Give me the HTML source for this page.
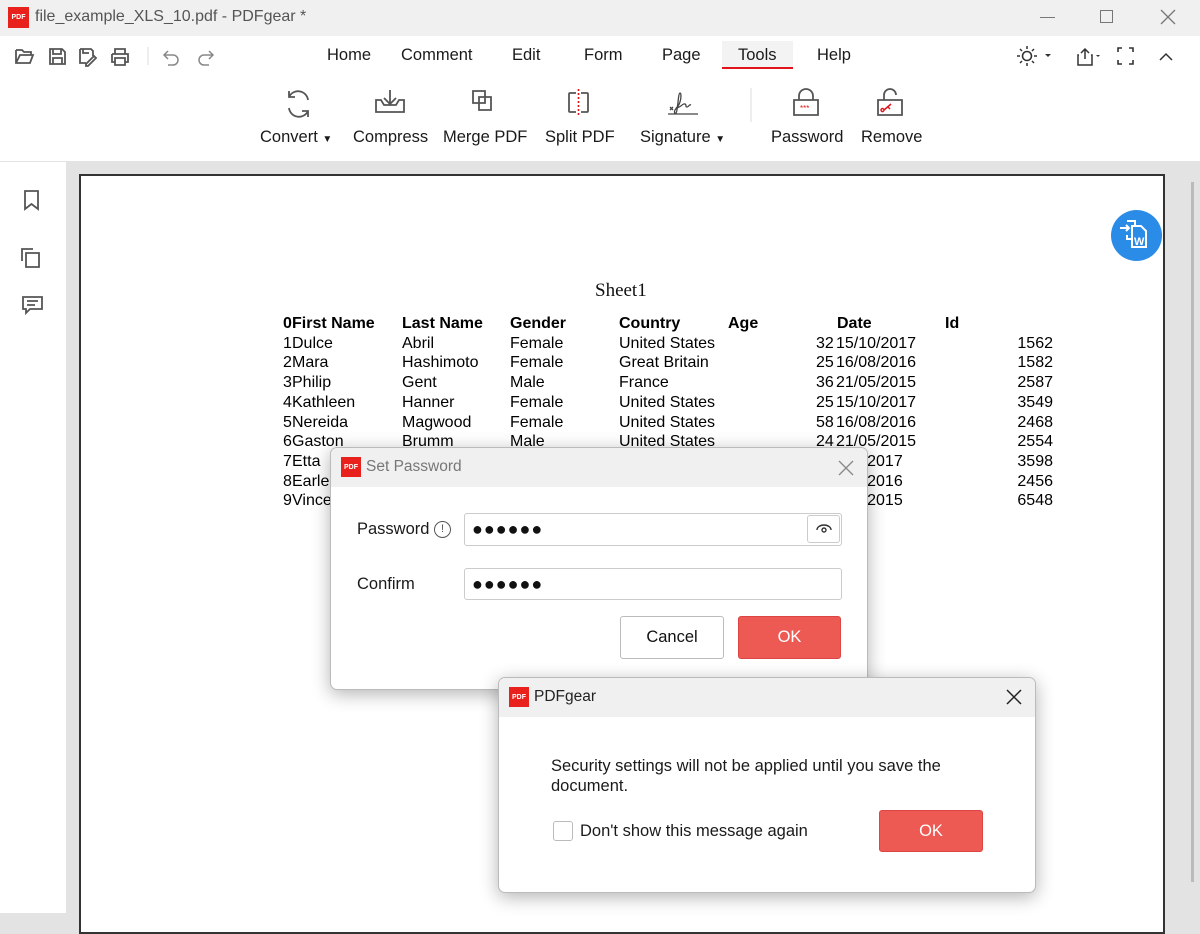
<!DOCTYPE html>
<html><head><meta charset="utf-8"><style>
*{margin:0;padding:0;box-sizing:border-box}
body{width:1200px;height:913px;overflow:hidden;position:relative;background:#e3e3e3;font-family:"Liberation Sans",sans-serif;color:#111}
.a{position:absolute}
.tb{font-size:16.5px;color:#1a1a1a}
.ic{stroke:#555;fill:none;stroke-width:1.8}
.tbl{font-family:"Liberation Sans",sans-serif;font-size:16px;color:#000}
.logo{background:#e8211d;color:#fff;font-size:7px;font-weight:bold;display:flex;align-items:center;justify-content:center}
</style></head><body>
<div class="a" style="left:0;top:0;width:1200px;height:36px;background:#f0f0f0"></div>
<div class="a logo" style="left:8px;top:7px;width:21px;height:21px">PDF</div>
<div class="a" style="left:35px;top:8px;font-size:16px;color:#555">file_example_XLS_10.pdf - PDFgear *</div>
<div class="a" style="left:1040px;top:17px;width:15px;height:1px;background:#777"></div>
<div class="a" style="left:1100px;top:10px;width:13px;height:13px;border:1.3px solid #777"></div>
<svg class="a" style="left:1160px;top:9px" width="16" height="16"><path d="M1 1L15 15M15 1L1 15" stroke="#777" stroke-width="1.3"/></svg>
<div class="a" style="left:0;top:36px;width:1200px;height:125px;background:#fff"></div>
<svg class="a" style="left:12px;top:44px" width="210" height="24">
<path class="ic" stroke-width="1.6" d="M4 6h6l2 2h7v3M4 6v13h14l3-8H8l-4 8"/>
<path class="ic" stroke-width="1.6" d="M38 5h12l3 3v12H38zM41 5v5h8V5M41 20v-6h9v6"/>
<path class="ic" stroke-width="1.6" d="M68 5h11l2 2v5M68 5v14h6M71 5v4h6M74 20l8-8 2 2-8 8h-2z"/>
<path class="ic" stroke-width="1.6" d="M100 10h16v8h-3M100 10v8h3M103 10V5h10v5M103 14h10v7h-10z"/>
<line x1="136" y1="3" x2="136" y2="21" stroke="#ddd"/>
<path d="M156 7l-4 4 4 4M152 11h9a5 5 0 010 10h-5" stroke="#888" fill="none" stroke-width="1.5"/>
<path d="M197 7l4 4-4 4M201 11h-9a5 5 0 000 10h5" stroke="#888" fill="none" stroke-width="1.5"/>
</svg>
<div class="a tb" style="left:327px;top:46px">Home</div>
<div class="a tb" style="left:401px;top:46px">Comment</div>
<div class="a tb" style="left:512px;top:46px">Edit</div>
<div class="a tb" style="left:584px;top:46px">Form</div>
<div class="a tb" style="left:662px;top:46px">Page</div>
<div class="a" style="left:722px;top:41px;width:71px;height:28px;background:#f3f3f3;border-bottom:2px solid #e0141a"></div>
<div class="a tb" style="left:738px;top:46px">Tools</div>
<div class="a tb" style="left:817px;top:46px">Help</div>
<svg class="a" style="left:1015px;top:44px" width="170" height="24">
<circle cx="12" cy="12" r="4.5" fill="none" stroke="#333" stroke-width="1.6"/>
<path d="M12 2v3M12 19v3M2 12h3M19 12h3M5 5l2 2M17 17l2 2M5 19l2-2M17 7l2-2" stroke="#333" stroke-width="1.5"/>
<path d="M30 10l3 3 3-3z" fill="#333"/>
<path d="M66 9l4-4 4 4M70 5v10M64 11h-1v10h14V11h-1" stroke="#333" fill="none" stroke-width="1.5"/>
<path d="M81 11l2 2 2-2z" fill="#333"/>
<path d="M103 8V4h4M114 4h4v4M118 16v4h-4M107 20h-4v-4" stroke="#333" fill="none" stroke-width="1.6"/>
<path d="M145 16l6-6 6 6" stroke="#333" fill="none" stroke-width="1.5"/>
</svg>
<svg class="a" style="left:270px;top:88px" width="660" height="34">
<path class="ic" d="M38 12A10 10 0 0019 9M19 3v6h6M19 20a10 10 0 0019 3M38 29v-6h-6"/>
<path class="ic" d="M120 2v14M114 10l6 6 6-6M106 12h5l3 5h12l3-5h5v12h-28z"/>
<path class="ic" d="M203 3h12v12h-12zM209 9h12v13h-12z"/>
<path class="ic" d="M306 5h-6a1 1 0 00-1 1v17a1 1 0 001 1h6M311 5h6a1 1 0 011 1v17a1 1 0 01-1 1h-6"/>
<path d="M308.5 1v28" stroke="#e0141a" stroke-dasharray="2 2" stroke-width="1.6"/>
<path d="M400 19l3 3M403 19l-3 3M406 20c5-3 6-15 4-15s-2 18-4 20 -3-4 3-6c3-1 4-4 6-3s0 3 2 3 2-3 4-2M398 26h30" stroke="#444" fill="none" stroke-width="1.3"/>
<line x1="481" y1="0" x2="481" y2="58" stroke="#ddd"/>
<path class="ic" d="M529 12V8a7 7 0 0114 0v4M524 12h24v15h-24z"/>
<text x="530" y="23" font-size="8" fill="#e0141a">***</text>
<path class="ic" d="M614 12V7a6 6 0 0112 0M608 12h24v15h-24z"/>
<path d="M614 22l7-6M618 19l2 2M614 22a1.5 1.5 0 100 .1" stroke="#e0141a" fill="none" stroke-width="1.5"/>
</svg>
<div class="a tb" style="left:260px;top:128px">Convert <span style="font-size:10px">▼</span></div>
<div class="a tb" style="left:353px;top:128px">Compress</div>
<div class="a tb" style="left:443px;top:128px">Merge PDF</div>
<div class="a tb" style="left:545px;top:128px">Split PDF</div>
<div class="a tb" style="left:640px;top:128px">Signature <span style="font-size:10px">▼</span></div>
<div class="a tb" style="left:771px;top:128px">Password</div>
<div class="a tb" style="left:861px;top:128px">Remove</div>
<div class="a" style="left:0;top:162px;width:66px;height:751px;background:#fff"></div>
<svg class="a" style="left:18px;top:188px" width="30" height="130">
<path d="M7 3h13v18l-6.5-5L7 21z" class="ic" stroke="#777" stroke-width="1.5"/>
<path d="M4 73V61h11M8 65h13v14H8z" class="ic" stroke="#777" stroke-width="1.5"/>
<path d="M5 109h19v12H12l-4 4v-4H5z M9 113h11M9 117h8" class="ic" stroke="#777" stroke-width="1.5"/>
</svg>
<div class="a" style="left:79px;top:174px;width:1086px;height:760px;background:#fff;border:2px solid #333"></div>
<div class="a" style="left:1191px;top:182px;width:3px;height:700px;background:#bbb"></div>
<div class="a" style="left:1111px;top:210px;width:51px;height:51px;border-radius:50%;background:#2b8ce8"></div>
<svg class="a" style="left:1118px;top:218px" width="40" height="36"><path d="M2 10h9M8 7l3 3-3 3M9 3h8v4M9 17v4h4M14 8h9l5 5v16H14z" stroke="#fff" fill="none" stroke-width="2"/><text x="16" y="27" font-size="11" font-weight="bold" fill="#fff">W</text></svg>
<div class="a" style="left:595px;top:280px;font-family:'Liberation Serif',serif;font-size:19px">Sheet1</div>
<div class="a tbl" style="left:0;top:314px;width:1200px;height:200px;line-height:19.7px">
<div class="a" style="left:283px;top:0;font-weight:bold">0<br></div>
<div class="a" style="left:283px;top:19.7px;line-height:19.7px">1<br>2<br>3<br>4<br>5<br>6<br>7<br>8<br>9</div>
<div class="a" style="left:292px;top:0"><b>First Name</b><br>Dulce<br>Mara<br>Philip<br>Kathleen<br>Nereida<br>Gaston<br>Etta<br>Earle<br>Vince</div>
<div class="a" style="left:402px;top:0"><b>Last Name</b><br>Abril<br>Hashimoto<br>Gent<br>Hanner<br>Magwood<br>Brumm</div>
<div class="a" style="left:510px;top:0"><b>Gender</b><br>Female<br>Female<br>Male<br>Female<br>Female<br>Male</div>
<div class="a" style="left:619px;top:0"><b>Country</b><br>United States<br>Great Britain<br>France<br>United States<br>United States<br>United States</div>
<div class="a" style="left:728px;top:0"><b>Age</b></div>
<div class="a" style="left:837px;top:0"><b>Date</b></div>
<div class="a" style="left:816px;top:19.7px">32<br>25<br>36<br>25<br>58<br>24</div>
<div class="a" style="left:836px;top:19.7px">15/10/2017<br>16/08/2016<br>21/05/2015<br>15/10/2017<br>16/08/2016<br>21/05/2015<br>&nbsp;&nbsp;&nbsp;&nbsp;0/2017<br>&nbsp;&nbsp;&nbsp;&nbsp;8/2016<br>&nbsp;&nbsp;&nbsp;&nbsp;5/2015</div>
<div class="a" style="left:945px;top:0"><b>Id</b></div>
<div class="a" style="left:1000px;top:19.7px;width:53px;text-align:right">1562<br>1582<br>2587<br>3549<br>2468<br>2554<br>3598<br>2456<br>6548</div>
</div>
<div class="a" style="left:330px;top:447px;width:538px;height:243px;background:#fff;border:1px solid #bbb;border-radius:7px;box-shadow:0 4px 18px rgba(0,0,0,.3);overflow:hidden">
<div style="height:39px;background:#f0f0f0;position:relative">
<div class="a logo" style="left:10px;top:9px;width:20px;height:20px">PDF</div>
<div class="a" style="left:35px;top:10px;font-size:15.5px;color:#777">Set Password</div>
<svg class="a" style="left:507px;top:12px" width="16" height="16"><path d="M1 1L15 15M15 1L1 15" stroke="#888" stroke-width="1.3"/></svg>
</div>
<div class="a tb" style="left:26px;top:72px">Password</div>
<div class="a" style="left:103px;top:73px;width:17px;height:17px;border:1.3px solid #555;border-radius:50%;font-size:11px;text-align:center;line-height:15px;color:#555">!</div>
<div class="a" style="left:133px;top:65px;width:378px;height:33px;border:1px solid #ccc;border-radius:3px;font-size:18px;line-height:31px;padding-left:7px;letter-spacing:1px">●●●●●●</div>
<div class="a" style="left:476px;top:67px;width:33px;height:28px;border:1px solid #ccc;border-radius:3px"></div>
<svg class="a" style="left:484px;top:74px" width="18" height="14"><path d="M2 8a7 5 0 0114 0" stroke="#333" fill="none" stroke-width="1.4"/><circle cx="9" cy="8" r="2" stroke="#333" fill="none" stroke-width="1.4"/></svg>
<div class="a tb" style="left:26px;top:127px">Confirm</div>
<div class="a" style="left:133px;top:120px;width:378px;height:32px;border:1px solid #ccc;border-radius:3px;font-size:18px;line-height:30px;padding-left:7px;letter-spacing:1px">●●●●●●</div>
<div class="a" style="left:289px;top:168px;width:104px;height:43px;border:1px solid #bbb;border-radius:3px;text-align:center;line-height:41px;font-size:16.5px">Cancel</div>
<div class="a" style="left:407px;top:168px;width:103px;height:43px;background:#ed5a54;border:1px solid #d44;border-radius:3px;text-align:center;line-height:41px;font-size:16.5px;color:#fff">OK</div>
</div>
<div class="a" style="left:498px;top:677px;width:538px;height:216px;background:#fff;border:1px solid #bbb;border-radius:7px;box-shadow:0 4px 18px rgba(0,0,0,.3);overflow:hidden">
<div style="height:39px;background:#f0f0f0;position:relative">
<div class="a logo" style="left:10px;top:9px;width:20px;height:20px">PDF</div>
<div class="a" style="left:35px;top:10px;font-size:15.5px;color:#222">PDFgear</div>
<svg class="a" style="left:507px;top:11px" width="16" height="16"><path d="M1 1L15 15M15 1L1 15" stroke="#222" stroke-width="1.5"/></svg>
</div>
<div class="a tb" style="left:52px;top:78px;line-height:20px;width:440px">Security settings will not be applied until you save the document.</div>
<div class="a" style="left:54px;top:143px;width:20px;height:20px;border:1px solid #bbb;border-radius:3px"></div>
<div class="a tb" style="left:81px;top:144px">Don't show this message again</div>
<div class="a" style="left:380px;top:132px;width:104px;height:42px;background:#ed5a54;border:1px solid #d44;border-radius:3px;text-align:center;line-height:40px;font-size:16.5px;color:#fff">OK</div>
</div>
</body></html>
